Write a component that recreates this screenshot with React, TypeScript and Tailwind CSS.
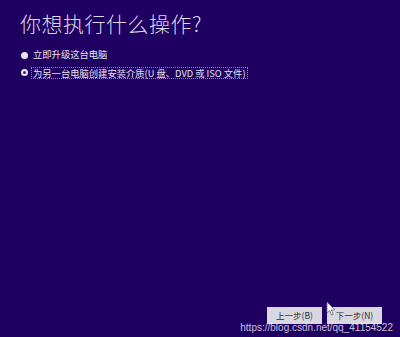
const font = { fontFamily: '"Microsoft YaHei", "Noto Sans CJK SC", "Liberation Sans", sans-serif' };

const Radio = ({ checked }: { checked?: boolean }) => (
  <span className="flex h-[7px] w-[7px] shrink-0 items-center justify-center rounded-full bg-[#e8e8ee]">
    {checked && <span className="h-[3px] w-[3px] rounded-full bg-[#3a2a70]" />}
  </span>
);

export default function App() {
  return (
    <div className="relative flex h-[337px] w-[400px] flex-col overflow-hidden bg-[#1f0062] text-[#e4e2ec]" style={font}>
      <h1 className="pl-[20px] pt-[9px] text-[21px] font-light leading-[28px] tracking-[0.5px] text-[#dcdae6]">你想执行什么操作?</h1>

      <div className="mt-[12px] flex flex-col gap-[5px] pl-[21px] text-[9.3px]">
        <label className="flex h-[12px] items-center gap-[4px]">
          <Radio />
          <span className="px-[1px]">立即升级这台电脑</span>
        </label>
        <label className="flex h-[13px] items-center gap-[3px]">
          <Radio checked />
          <span className="border border-dotted border-[#8d80b5] px-[1px] leading-[10px]">为另一台电脑创建安装介质(U 盘、DVD 或 ISO 文件)</span>
        </label>
      </div>

      <div className="mt-auto flex justify-end gap-[5px] pb-[13px] pr-[18px]">
        <button className="h-[17px] w-[55px] bg-[#d9d8e0] text-[8.5px] text-[#2a2a40]">上一步(B)</button>
        <button className="h-[17px] w-[55px] bg-[#d9d8e0] text-[8.5px] text-[#2a2a40]">下一步(N)</button>
      </div>

      {/* 鼠标指针 */}
      <svg className="absolute left-[326px] top-[301px]" width="10" height="15" viewBox="0 0 10 15">
        <path d="M1 1 L1 12 L3.6 9.6 L5.6 14 L7.2 13.2 L5.3 8.9 L8.8 8.9 Z" fill="#ffffff" stroke="#6a6a80" strokeWidth="0.8" />
      </svg>

      {/* 水印 */}
      <div className="absolute bottom-[3px] right-[7px] text-[10px] leading-[12px] text-white/75" style={{ fontFamily: '"Liberation Sans", sans-serif' }}>
        https://blog.csdn.net/qq_41154522
      </div>
    </div>
  );
}
